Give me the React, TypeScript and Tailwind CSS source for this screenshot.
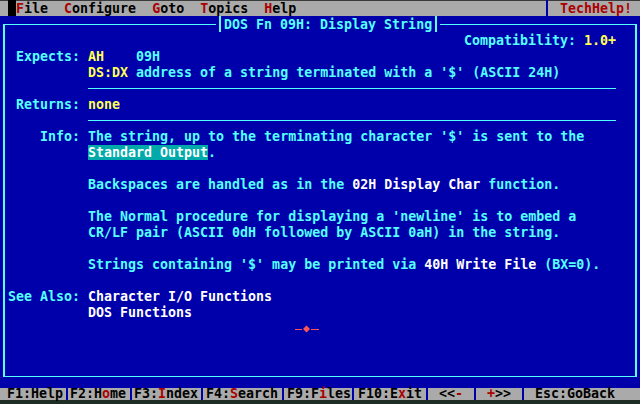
import React from "react";

const ROW = "h-4 leading-[18px] whitespace-pre";

function R({ children }: { children: React.ReactNode }) {
  return <span className="text-[#aa0000]">{children}</span>;
}
function Y({ children }: { children: React.ReactNode }) {
  return <span className="text-[#ffff55]">{children}</span>;
}
function W({ children }: { children: React.ReactNode }) {
  return <span className="text-white">{children}</span>;
}

function Blank() {
  return <div className="h-4" />;
}

function Rule() {
  return (
    <div className="h-4 pt-2">
      <div className="ml-[83px] h-px w-[528px] bg-[#55ffff]" />
    </div>
  );
}

function Labeled({ label, children }: { label?: string; children: React.ReactNode }) {
  return (
    <div className={`flex ${ROW}`}>
      <div className="w-[75px] shrink-0 text-right">{label ?? ""}</div>
      <div className="ml-2">{children}</div>
    </div>
  );
}

const footer: { w: string; pl: string; pre: string; hot?: string; post?: string }[] = [];

export default function App() {
  return (
    <div className="w-[640px] h-[404px] overflow-hidden bg-[#0000aa] font-['DejaVu_Sans_Mono',monospace] font-bold text-[13.3px] text-[#55ffff]">
      {/* menu bar */}
      <div className="flex h-4 bg-[#aaaaaa] text-black leading-[18px] whitespace-pre shadow-[inset_0_1px_0_#3a3a3a]">
        <span className="w-2" />
        <span className="w-2 bg-black" />
        <span>
          <R>F</R>ile  <R>C</R>onfigure  <R>G</R>oto  <R>T</R>opics  <R>H</R>elp
        </span>
        <div className="ml-auto flex w-[96px]">
          <span className="ml-[2px] w-[2px] bg-[#0000aa]" />
          <span className="ml-[12px] text-[#aa0000]">TechHelp!</span>
        </div>
      </div>

      {/* main area */}
      <div className="h-[372px] pt-2">
        <div className="relative ml-[3px] box-border h-[353px] w-[634px] border-x-2 border-y border-[#55ffff] pt-[7px]">
          {/* title over the top border */}
          <div className="absolute left-[211px] top-[-9px] flex h-4 w-[224px] bg-[#0000aa]">
            <div className="w-2 shrink-0">
              <div className="ml-[3px] h-4 w-[2px] bg-[#55ffff]" />
            </div>
            <div className="w-[208px] leading-[18px] whitespace-pre">DOS Fn 09H: Display String</div>
            <div className="w-2 shrink-0">
              <div className="ml-[3px] h-4 w-[2px] bg-[#55ffff]" />
            </div>
          </div>

          <div className={`${ROW} pl-[459px]`}>
            Compatibility: <Y>1.0+</Y>
          </div>
          <Labeled label="Expects:">
            <Y>AH</Y>    09H
          </Labeled>
          <Labeled>
            <Y>DS:DX</Y> address of a string terminated with a '$' (ASCII 24H)
          </Labeled>
          <Rule />
          <Labeled label="Returns:">
            <Y>none</Y>
          </Labeled>
          <Rule />
          <Labeled label="Info:">
            The string, up to the terminating character '$' is sent to the
          </Labeled>
          <Labeled>
            <span className="bg-[#00aaaa] text-white">Standard Output</span>.
          </Labeled>
          <Blank />
          <Labeled>
            Backspaces are handled as in the <W>02H Display Char</W> function.
          </Labeled>
          <Blank />
          <Labeled>
            The Normal procedure for displaying a 'newline' is to embed a
          </Labeled>
          <Labeled>CR/LF pair (ASCII 0dH followed by ASCII 0aH) in the string.</Labeled>
          <Blank />
          <Labeled>
            Strings containing '$' may be printed via <W>40H Write File</W> (BX=0).
          </Labeled>
          <Blank />
          <Labeled label="See Also:">
            <W>Character I/O Functions</W>
          </Labeled>
          <Labeled>
            <W>DOS Functions</W>
          </Labeled>
          <div className="h-4 pl-[290px]">
            <svg width="24" height="16" viewBox="0 0 24 16" className="block">
              <rect x="0" y="9" width="7" height="1" fill="#ff5555" />
              <rect x="16" y="9" width="8" height="1" fill="#ff5555" />
              <polygon points="11.5,5.5 15,9 11.5,12.5 8,9" fill="#ff5555" />
            </svg>
          </div>
        </div>
      </div>

      {/* footer */}
      <div className="flex h-3 bg-[#aaaaaa] text-black leading-[11px] whitespace-pre">
        <div className="w-[66px] pl-[7px]">F1:Help</div>
        <div className="w-[2px] bg-[#0000aa]" />
        <div className="w-[62px] pl-[2px]">
          F2:H<R>o</R>me
        </div>
        <div className="w-[2px] bg-[#0000aa]" />
        <div className="w-[69px] pl-[2px]">
          F3:<R>I</R>ndex
        </div>
        <div className="w-[2px] bg-[#0000aa]" />
        <div className="w-[79px] pl-[3px]">
          F4:<R>S</R>earch
        </div>
        <div className="w-[2px] bg-[#0000aa]" />
        <div className="w-[68px] pl-[3px]">
          F9:F<R>i</R>les
        </div>
        <div className="w-[2px] bg-[#0000aa]" />
        <div className="w-[72px] pl-[4px]">
          F10:E<R>x</R>it
        </div>
        <div className="w-[2px] bg-[#0000aa]" />
        <div className="w-[46px] pl-[11px]">
          {"<<"}
          <R>-</R>
        </div>
        <div className="w-[2px] bg-[#0000aa]" />
        <div className="w-[46px] pl-[11px]">
          <R>+</R>
          {">>"}
        </div>
        <div className="w-[2px] bg-[#0000aa]" />
        <div className="flex-1 pl-[11px]">Esc:GoBack</div>
      </div>
      <div className="h-1 bg-[#1e2e26]" />
    </div>
  );
}
